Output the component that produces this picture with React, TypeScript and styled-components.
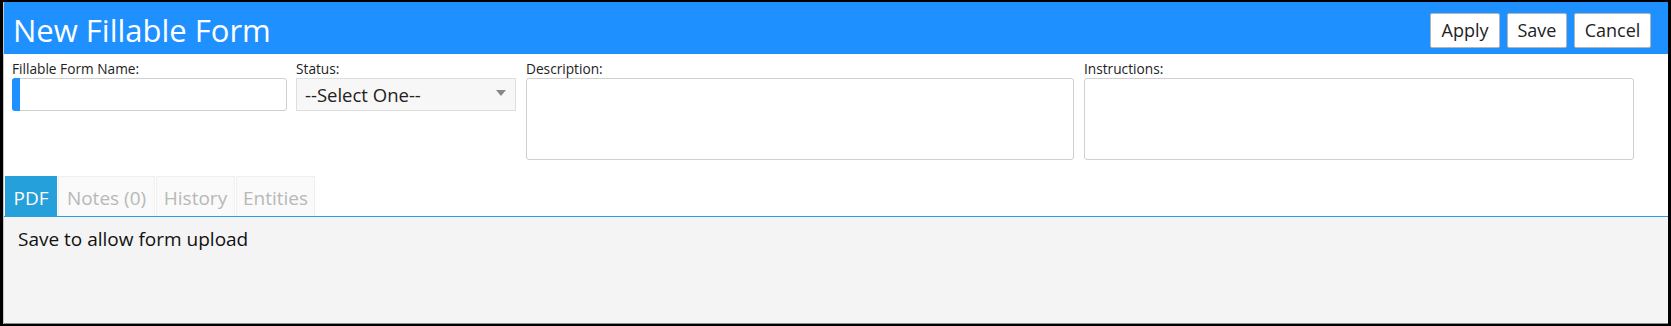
import React from "react";
import styled, { createGlobalStyle } from "styled-components";

const Global = createGlobalStyle`
  html, body { margin: 0; padding: 0; background: #000; }
  body { font-family: "Open Sans", "Noto Sans", sans-serif; }
  * { box-sizing: border-box; }
`;

const Frame = styled.div`
  width: 1671px;
  height: 326px;
  padding: 2px 3px 2px 3px;
  background: #000;
`;

const Panel = styled.div`
  height: 100%;
  background: #fff;
  border-left: 1px solid #c8c8c8;
  display: flex;
  flex-direction: column;
`;

const Header = styled.header`
  height: 52px;
  flex: none;
  background: #1e90ff;
  display: flex;
  align-items: center;
  justify-content: space-between;
  padding: 0 17px 0 9px;
`;

const Title = styled.h1`
  margin: 0;
  color: #fff;
  font-size: 31px;
  font-weight: 400;
  line-height: 1;
  padding-top: 5px;
`;

const Actions = styled.div`
  display: flex;
  gap: 7px;
  padding-top: 4px;
`;

const Button = styled.button<{ $w: number }>`
  width: ${(p) => p.$w}px;
  height: 35px;
  padding: 0;
  background: #fff;
  border: 1px solid #b5b5b5;
  border-radius: 2px;
  font-family: inherit;
  font-size: 18px;
  color: #222;
`;

const FormRow = styled.div`
  display: flex;
  align-items: flex-start;
  padding: 5px 8px 0 8px;
`;

const Field = styled.div<{ $w: number; $gap: number }>`
  flex: none;
  width: ${(p) => p.$w}px;
  margin-right: ${(p) => p.$gap}px;
  display: flex;
  flex-direction: column;
`;

const Label = styled.label`
  font-size: 13.7px;
  color: #222;
  line-height: 19px;
  white-space: nowrap;
`;

const TextInput = styled.div`
  position: relative;
  height: 33px;
  border: 1px solid #d0d0d0;
  border-radius: 3px;
  background: #fff;
`;

const Indicator = styled.span`
  position: absolute;
  left: -1px;
  top: -1px;
  bottom: -1px;
  width: 8px;
  background: #1e90ff;
  border-radius: 3px 0 0 3px;
`;

const Select = styled.div`
  height: 33px;
  border: 1px solid #dedede;
  background: #f7f7f7;
  display: flex;
  align-items: center;
  justify-content: space-between;
  padding: 0 9px 0 8px;
  font-size: 18.5px;
  color: #222;
`;

const Caret = styled.span`
  width: 0;
  height: 0;
  border-left: 5px solid transparent;
  border-right: 5px solid transparent;
  border-top: 6px solid #888;
  margin-top: -4px;
`;

const TextArea = styled.div`
  height: 82px;
  border: 1px solid #d0d0d0;
  border-radius: 3px;
  background: #fff;
`;

const Tabs = styled.div`
  display: flex;
  flex: none;
  margin-top: 16px;
  padding-left: 1px;
  border-bottom: 1px solid #26a0da;
`;

const Tab = styled.div<{ $active?: boolean; $w: number }>`
  width: ${(p) => p.$w}px;
  height: 40px;
  display: flex;
  align-items: center;
  justify-content: center;
  font-size: 19px;
  padding-top: 3px;
  white-space: nowrap;
  color: ${(p) => (p.$active ? "#fff" : "#b8b8b8")};
  background: ${(p) => (p.$active ? "#26a0da" : "#fafafa")};
  border: 1px solid ${(p) => (p.$active ? "#26a0da" : "#efefef")};
  border-bottom: none;
  margin-right: 1px;
`;

const Content = styled.div`
  flex: 1;
  background: #f4f4f4;
  padding: 9px 14px;
  font-size: 19px;
  color: #111;
  border-bottom: 1px solid #8a8a8a;
`;

export default function App() {
  return (
    <>
      <Global />
      <Frame>
        <Panel>
          <Header>
            <Title>New Fillable Form</Title>
            <Actions>
              <Button $w={70}>Apply</Button>
              <Button $w={60}>Save</Button>
              <Button $w={77}>Cancel</Button>
            </Actions>
          </Header>
          <FormRow>
            <Field $w={275} $gap={9}>
              <Label>Fillable Form Name:</Label>
              <TextInput>
                <Indicator />
              </TextInput>
            </Field>
            <Field $w={220} $gap={10}>
              <Label>Status:</Label>
              <Select>
                <span>--Select One--</span>
                <Caret />
              </Select>
            </Field>
            <Field $w={548} $gap={10}>
              <Label>Description:</Label>
              <TextArea />
            </Field>
            <Field $w={550} $gap={0}>
              <Label>Instructions:</Label>
              <TextArea />
            </Field>
          </FormRow>
          <Tabs>
            <Tab $active $w={52}>PDF</Tab>
            <Tab $w={97}>Notes (0)</Tab>
            <Tab $w={79}>History</Tab>
            <Tab $w={79}>Entities</Tab>
          </Tabs>
          <Content>Save to allow form upload</Content>
        </Panel>
      </Frame>
    </>
  );
}
